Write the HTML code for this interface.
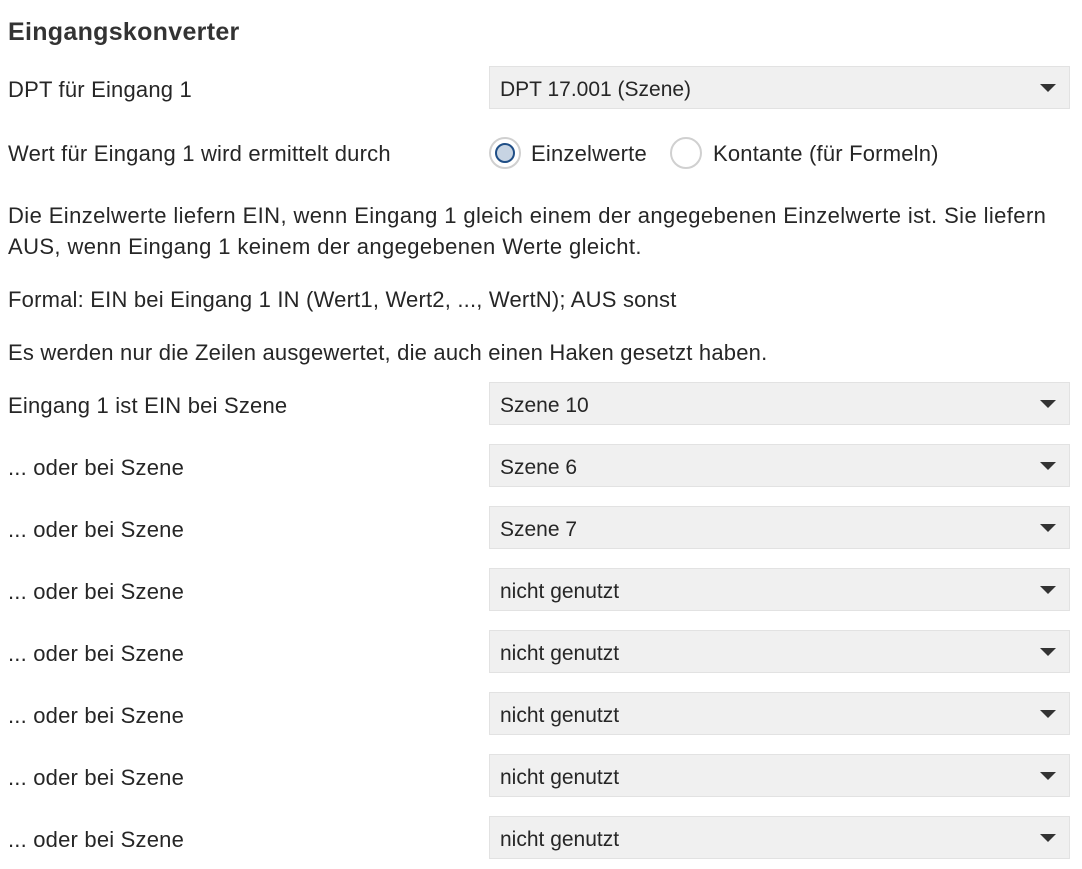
<!DOCTYPE html>
<html><head><meta charset="utf-8"><style>
body{margin:0;width:1082px;height:869px;background:#fff;font-family:"Liberation Sans",sans-serif;color:#262626;position:relative;overflow:hidden}
.t{position:absolute;left:8px;font-size:22px;white-space:nowrap;line-height:26px;letter-spacing:0.2px}
.h{font-weight:bold;font-size:25px;color:#333;letter-spacing:0.3px}
.dd{position:absolute;left:489px;width:569px;height:41px;background:#f0f0f0;border:1px solid #e2e2e2;font-size:21px;line-height:45px;padding-left:10px;box-sizing:content-box}
.dd::after{content:"";position:absolute;right:13px;top:17px;border-left:8px solid transparent;border-right:8px solid transparent;border-top:8px solid #333}
.r{position:absolute;width:28px;height:28px;border:2px solid #d0d0d0;border-radius:50%;background:#fff}
.r i{position:absolute;left:4px;top:4px;width:16px;height:16px;border:2px solid #1f4e86;border-radius:50%;background:#c7d4e3}
</style></head><body>
<div class="t h" style="top:19px">Eingangskonverter</div>
<div class="t" style="top:77px">DPT für Eingang 1</div>
<div class="dd" style="top:66px">DPT 17.001 (Szene)</div>
<div class="t" style="top:141px">Wert für Eingang 1 wird ermittelt durch</div>
<div class="r" style="left:489px;top:137px"><i></i></div>
<div class="t" style="left:531px;top:141px">Einzelwerte</div>
<div class="r" style="left:670px;top:137px"></div>
<div class="t" style="left:713px;top:141px">Kontante (für Formeln)</div>
<div class="t" style="top:203px;letter-spacing:0.4px">Die Einzelwerte liefern EIN, wenn Eingang 1 gleich einem der angegebenen Einzelwerte ist. Sie liefern</div>
<div class="t" style="top:234px;letter-spacing:0.4px">AUS, wenn Eingang 1 keinem der angegebenen Werte gleicht.</div>
<div class="t" style="top:287px">Formal: EIN bei Eingang 1 IN (Wert1, Wert2, ..., WertN); AUS sonst</div>
<div class="t" style="top:340px">Es werden nur die Zeilen ausgewertet, die auch einen Haken gesetzt haben.</div>
<div class="t" style="top:393px">Eingang 1 ist EIN bei Szene</div>
<div class="dd" style="top:382px">Szene 10</div>
<div class="t" style="top:455px">... oder bei Szene</div>
<div class="dd" style="top:444px">Szene 6</div>
<div class="t" style="top:517px">... oder bei Szene</div>
<div class="dd" style="top:506px">Szene 7</div>
<div class="t" style="top:579px">... oder bei Szene</div>
<div class="dd" style="top:568px">nicht genutzt</div>
<div class="t" style="top:641px">... oder bei Szene</div>
<div class="dd" style="top:630px">nicht genutzt</div>
<div class="t" style="top:703px">... oder bei Szene</div>
<div class="dd" style="top:692px">nicht genutzt</div>
<div class="t" style="top:765px">... oder bei Szene</div>
<div class="dd" style="top:754px">nicht genutzt</div>
<div class="t" style="top:827px">... oder bei Szene</div>
<div class="dd" style="top:816px">nicht genutzt</div>
</body></html>
